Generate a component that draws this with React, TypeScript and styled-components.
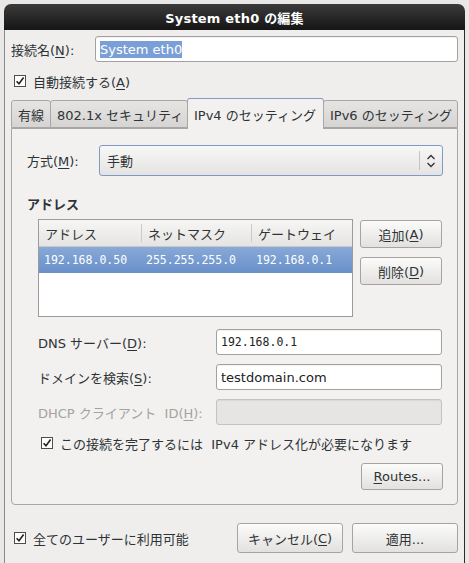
import React from 'react';
import styled, { createGlobalStyle } from 'styled-components';

const GlobalStyle = createGlobalStyle`
  html, body {
    margin: 0;
    padding: 0;
    background: #e9e8e7;
  }
  body {
    font-family: "DejaVu Sans", "Noto Sans CJK JP", sans-serif;
    font-size: 13px;
    color: #2e3436;
  }
  u {
    text-underline-offset: 2px;
  }
`;

const Window = styled.div`
  margin: 4px 4px 0 4px;
  width: 461px;
  height: 559px;
  display: flex;
  flex-direction: column;
`;

const TitleBar = styled.div`
  height: 26px;
  flex: none;
  border-radius: 7px 7px 0 0;
  background: linear-gradient(#3b3b3b, #151515);
  color: #ffffff;
  font-weight: bold;
  font-size: 13px;
  display: flex;
  align-items: center;
  justify-content: center;
  letter-spacing: 0.2px;
`;

const Body = styled.div`
  flex: 1;
  background: #efeeed;
  border-left: 1px solid #8a8a8a;
  border-right: 1px solid #2a2a2a;
  padding: 6px 6px 0 6px;
  display: flex;
  flex-direction: column;
`;

const Row = styled.div`
  display: flex;
  align-items: center;
`;

const Label = styled.label<{ $width?: number; $disabled?: boolean }>`
  flex: none;
  width: ${(p) => (p.$width ? `${p.$width}px` : 'auto')};
  color: ${(p) => (p.$disabled ? '#a3a2a0' : '#2e3436')};
  white-space: nowrap;
`;

const Entry = styled.div<{ $width?: number; $mono?: boolean; $disabled?: boolean }>`
  box-sizing: border-box;
  height: 26px;
  width: ${(p) => (p.$width ? `${p.$width}px` : 'auto')};
  flex: ${(p) => (p.$width ? 'none' : '1')};
  border: 1px solid ${(p) => (p.$disabled ? '#c4c3c1' : '#a2a19f')};
  border-radius: 3px;
  background: ${(p) => (p.$disabled ? '#e6e5e4' : '#ffffff')};
  box-shadow: inset 0 1px 1px rgba(0, 0, 0, 0.06);
  display: flex;
  align-items: center;
  padding: 0 4px;
  font-family: ${(p) =>
    p.$mono ? '"DejaVu Sans Mono", monospace' : '"DejaVu Sans", "Noto Sans CJK JP", sans-serif'};
  font-size: ${(p) => (p.$mono ? '11.5px' : '13px')};
  color: #222;
`;

const Selection = styled.span`
  background: #7a9fd6;
  color: #ffffff;
  padding: 1px 0;
`;

const CheckRow = styled.div<{ $indent?: number }>`
  display: flex;
  align-items: center;
  gap: 7px;
  padding-left: ${(p) => p.$indent ?? 0}px;
  white-space: nowrap;
`;

const Box = styled.svg`
  flex: none;
  width: 12px;
  height: 12px;
`;

function Check() {
  return (
    <Box viewBox="0 0 12 12">
      <rect x="0.5" y="0.5" width="11" height="11" fill="#ffffff" stroke="#4d4d4d" />
      <path d="M2.6 6.2 L5 8.8 L9.6 2.6" fill="none" stroke="#222" strokeWidth="1.6" />
    </Box>
  );
}

const Tabs = styled.div`
  display: flex;
  align-items: flex-end;
  height: 30px;
`;

const Tab = styled.div<{ $width: number; $active?: boolean }>`
  box-sizing: border-box;
  width: ${(p) => p.$width}px;
  height: ${(p) => (p.$active ? 31 : 28)}px;
  margin-bottom: ${(p) => (p.$active ? -1 : 0)}px;
  padding-left: 6px;
  display: flex;
  align-items: center;
  white-space: nowrap;
  border: 1px solid #a8a7a5;
  border-bottom: ${(p) => (p.$active ? 'none' : '1px solid #a8a7a5')};
  border-top: 1px solid ${(p) => (p.$active ? '#7e9cc6' : '#a8a7a5')};
  border-radius: 3px 3px 0 0;
  background: ${(p) =>
    p.$active ? '#f2f1f0' : 'linear-gradient(#e6e5e3, #d5d4d2)'};
  position: relative;
  z-index: ${(p) => (p.$active ? 1 : 0)};
  & + & {
    margin-left: -1px;
  }
`;

const Panel = styled.div`
  box-sizing: border-box;
  height: 377px;
  border: 1px solid #a8a7a5;
  border-radius: 0 0 4px 4px;
  background: #f2f1f0;
  padding: 16px 14px 0 15px;
  display: flex;
  flex-direction: column;
`;

const Combo = styled.div`
  box-sizing: border-box;
  flex: 1;
  height: 31px;
  border: 1px solid #7f9bc4;
  border-radius: 3px;
  background: linear-gradient(#f8f8f7, #e4e3e1);
  display: flex;
  align-items: center;
  padding-left: 7px;
`;

const ComboText = styled.span`
  flex: 1;
`;

const ComboSep = styled.div`
  width: 1px;
  align-self: stretch;
  margin: 5px 0;
  background: #c4c3c1;
`;

const ComboArrow = styled.svg`
  width: 22px;
  height: 16px;
`;

const SectionTitle = styled.div`
  font-weight: bold;
  margin: 18px 0 0 0;
`;

const AddressArea = styled.div`
  display: flex;
  gap: 7px;
  margin: 6px 0 0 11px;
`;

const Table = styled.div`
  box-sizing: border-box;
  width: 315px;
  height: 98px;
  border: 1px solid #9c9b99;
  background: #ffffff;
`;

const HeaderRow = styled.div`
  display: flex;
  height: 26px;
  background: linear-gradient(#f6f6f5, #e5e4e2);
  border-bottom: 1px solid #c9c8c6;
`;

const HeaderCell = styled.div<{ $width: number; $sep?: boolean }>`
  box-sizing: border-box;
  width: ${(p) => p.$width}px;
  padding-left: 6px;
  display: flex;
  align-items: center;
  color: #333;
  border-left: ${(p) => (p.$sep ? '1px solid #cbcac8' : 'none')};
  margin: ${(p) => (p.$sep ? '4px 0' : '0')};
`;

const DataRow = styled.div`
  display: flex;
  height: 26px;
  background: linear-gradient(#88a9d8, #6890c9);
  color: #ffffff;
  font-family: "DejaVu Sans Mono", monospace;
  font-size: 11.5px;
`;

const DataCell = styled.div<{ $width: number }>`
  width: ${(p) => p.$width}px;
  padding-left: 5px;
  box-sizing: border-box;
  display: flex;
  align-items: center;
`;

const ButtonColumn = styled.div`
  display: flex;
  flex-direction: column;
  gap: 9px;
  padding-top: 1px;
`;

const Button = styled.div<{ $width?: number; $height?: number }>`
  box-sizing: border-box;
  width: ${(p) => p.$width ?? 82}px;
  height: ${(p) => p.$height ?? 28}px;
  border: 1px solid #a5a4a2;
  border-radius: 3px;
  background: linear-gradient(#fbfbfa, #e2e1df);
  display: flex;
  align-items: center;
  justify-content: center;
  white-space: nowrap;
  color: #2e3436;
`;

const FieldGrid = styled.div`
  display: grid;
  grid-template-columns: 178px 226px;
  row-gap: 9px;
  align-items: center;
  margin: 12px 0 0 11px;
`;

const RoutesRow = styled.div`
  display: flex;
  justify-content: flex-end;
  margin-top: 11px;
`;

const Footer = styled.div`
  display: flex;
  align-items: center;
  margin-top: 18px;
  padding-left: 3px;
`;

const FooterButtons = styled.div`
  margin-left: auto;
  display: flex;
  gap: 9px;
`;

export default function App() {
  return (
    <>
      <GlobalStyle />
      <Window>
        <TitleBar>System eth0 の編集</TitleBar>
        <Body>
          <Row>
            <Label $width={84}>
              接続名(<u>N</u>):
            </Label>
            <Entry>
              <Selection>System eth0</Selection>
            </Entry>
          </Row>

          <CheckRow $indent={3} style={{ marginTop: 9, height: 20 }}>
            <Check />
            <span>
              自動接続する(<u>A</u>)
            </span>
          </CheckRow>

          <Tabs style={{ marginTop: 7 }}>
            <Tab $width={40}>有線</Tab>
            <Tab $width={138}>802.1x セキュリティ</Tab>
            <Tab $width={137} $active>
              IPv4 のセッティング
            </Tab>
            <Tab $width={135}>IPv6 のセッティング</Tab>
          </Tabs>

          <Panel>
            <Row>
              <Label $width={72}>
                方式(<u>M</u>):
              </Label>
              <Combo>
                <ComboText>手動</ComboText>
                <ComboSep />
                <ComboArrow viewBox="0 0 22 16">
                  <path d="M7.5 6 L11 2.5 L14.5 6" fill="none" stroke="#333" strokeWidth="1.3" />
                  <path d="M7.5 10 L11 13.5 L14.5 10" fill="none" stroke="#333" strokeWidth="1.3" />
                </ComboArrow>
              </Combo>
            </Row>

            <SectionTitle>アドレス</SectionTitle>

            <AddressArea>
              <Table>
                <HeaderRow>
                  <HeaderCell $width={102}>アドレス</HeaderCell>
                  <HeaderCell $width={110} $sep>
                    ネットマスク
                  </HeaderCell>
                  <HeaderCell $width={101} $sep>
                    ゲートウェイ
                  </HeaderCell>
                </HeaderRow>
                <DataRow>
                  <DataCell $width={102}>192.168.0.50</DataCell>
                  <DataCell $width={110}>255.255.255.0</DataCell>
                  <DataCell $width={101}>192.168.0.1</DataCell>
                </DataRow>
              </Table>
              <ButtonColumn>
                <Button>
                  追加(<u>A</u>)
                </Button>
                <Button>
                  削除(<u>D</u>)
                </Button>
              </ButtonColumn>
            </AddressArea>

            <FieldGrid>
              <Label>
                DNS サーバー(<u>D</u>):
              </Label>
              <Entry $mono>192.168.0.1</Entry>
              <Label>
                ドメインを検索(<u>S</u>):
              </Label>
              <Entry>testdomain.com</Entry>
              <Label $disabled>
                DHCP クライアント&nbsp; ID(<u>H</u>):
              </Label>
              <Entry $disabled />
            </FieldGrid>

            <CheckRow $indent={14} style={{ marginTop: 9, height: 18 }}>
              <Check />
              <span>この接続を完了するには&nbsp; IPv4 アドレス化が必要になります</span>
            </CheckRow>

            <RoutesRow>
              <Button $height={27}>
                <span>
                  <u>R</u>outes...
                </span>
              </Button>
            </RoutesRow>
          </Panel>

          <Footer>
            <CheckRow>
              <Check />
              <span>全てのユーザーに利用可能</span>
            </CheckRow>
            <FooterButtons>
              <Button $width={106} $height={30}>
                キャンセル(<u>C</u>)
              </Button>
              <Button $width={106} $height={30}>
                適用...
              </Button>
            </FooterButtons>
          </Footer>
        </Body>
      </Window>
    </>
  );
}
